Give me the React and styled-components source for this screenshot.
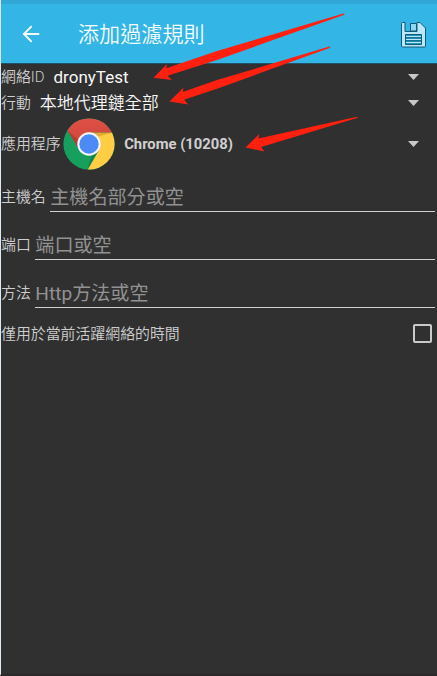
import React from "react";
import styled, { createGlobalStyle } from "styled-components";

const GlobalStyle = createGlobalStyle`
  * { box-sizing: border-box; }
  body {
    margin: 0;
    background: #303030;
    font-family: Roboto, "Noto Sans CJK TC", sans-serif;
  }
`;

const Screen = styled.div`
  position: relative;
  display: flex;
  flex-direction: column;
  width: 437px;
  height: 676px;
  overflow: hidden;
  background: #303030;
  border-left: 1px solid #dce9f2;
  border-bottom: 2px solid #2b282a;
  color: #cecece;
  font-size: 14.9px;
`;

const Header = styled.header`
  display: flex;
  align-items: center;
  height: 64px;
  padding: 2px 10px 0 20px;
  background: #33b5e5;
  border-top: 4px solid #31a7d6;
  border-bottom: 1px solid #1f5468;
`;

const Title = styled.h1`
  flex: 1;
  margin: 0 0 0 35px;
  color: #f6fcfe;
  font-size: 21.1px;
  font-weight: 350;
  line-height: 30px;
`;

const Row = styled.div`
  display: flex;
  align-items: center;
  height: ${(p) => p.$height}px;
  padding-right: ${(p) => p.$end ?? 18}px;
`;

const Label = styled.span`
  flex: none;
  font-weight: 350;
  line-height: 22px;
  white-space: nowrap;
`;

const Value = styled.span`
  flex: 1;
  margin-left: 9px;
  color: ${(p) => (p.$weight === 700 ? "#d0d0d0" : "#f8f8f8")};
  font-size: ${(p) => (p.$weight === 700 ? 14.8 : 17)}px;
  font-weight: ${(p) => p.$weight ?? 400};
  line-height: 24px;
  white-space: nowrap;
`;

const Caret = styled.svg`
  flex: none;
  width: 11px;
  height: 6px;
`;

const FieldRow = styled.label`
  display: flex;
  align-items: center;
  height: 48px;
  padding: 1px 2px 0 0;
`;

const Input = styled.input`
  flex: 1;
  min-width: 0;
  height: 31px;
  margin: 0 0 0 4px;
  padding: 2px 0 0 0.5px;
  border: 0;
  border-bottom: 1px solid #d0d0d0;
  border-radius: 0;
  outline: 0;
  background: transparent;
  color: #eee;
  font: 400 19.1px Roboto, "Noto Sans CJK TC", sans-serif;
  &::placeholder { color: #929292; opacity: 1; }
`;

const Checkbox = styled.input`
  appearance: none;
  width: 19px;
  height: 19px;
  margin: 0 0 0 auto;
  border: 2px solid #cacaca;
  border-radius: 2px;
`;

const Logo = styled.svg`
  flex: none;
  width: 52px;
  height: 52px;
  margin: 0 0 0 2.6px;
`;

const Arrows = styled.svg`
  position: absolute;
  top: 0;
  left: -1px;
  pointer-events: none;
`;

const DropCaret = () => (
  <Caret viewBox="0 0 11 6"><path d="M0 0h11L5.5 6z" fill="#c8c8c8" /></Caret>
);

const BackIcon = () => (
  <svg width="22" height="20" viewBox="0 0 22 20" fill="none" stroke="#f6fcfe" strokeWidth="1.9">
    <path d="M18.3 9H3M10.7 1.2L2.9 9l7.8 7.8" />
  </svg>
);

const SaveIcon = () => (
  <svg width="27" height="28" viewBox="0 0 27 28">
    <path d="M2.5 1.5H5v9h12V1.5h3L25.5 7v18q0 1-1 1h-22q-1 0-1-1V2.5q0-1 1-1z" fill="#b9e8fa" stroke="#125a79" />
    <path d="M10.5 2.5h6v7.5h-6z" fill="#8ed8f4" stroke="#125a79" />
    <path d="M5.5 13.5h16v10h-16z" fill="#2396c3" stroke="#125a79" />
    <path d="M6 15.5h15M6 18.5h15M6 21.5h15" stroke="#b9e8fa" />
    <path d="M6 16.7h15M6 19.7h15" stroke="#125a79" strokeWidth=".8" />
  </svg>
);

const ChromeLogo = () => (
  <Logo viewBox="0 0 52 52">
    <defs>
      <clipPath id="disc"><circle cx="26" cy="26" r="25.6" /></clipPath>
      <linearGradient id="redShade" x2="0" y2="1">
        <stop stopColor="#df5045" /><stop offset="1" stopColor="#d04439" />
      </linearGradient>
    </defs>
    <g clipPath="url(#disc)">
      <path d="M0 0h52v52H0z" fill="#17a05d" />
      <path d="M26 14.5h26V52H24.5L36 32z" fill="#ffce44" />
      <path d="M4.7 12.7L0 0h52v14.5H26L15.8 31z" fill="url(#redShade)" />
      <path d="M26 14.5h24l-15 4z" fill="#a76d12" opacity=".35" />
      <path d="M4.7 12.7l11.5 19 1.5-8z" fill="#7a1d16" opacity=".3" />
      <path d="M36 31.7L24.5 52l4-15z" fill="#0b5130" opacity=".35" />
    </g>
    <circle cx="26" cy="26" r="11.7" fill="#f4f6fa" />
    <circle cx="26" cy="26" r="9.7" fill="#4c8bf5" />
  </Logo>
);

export default function App() {
  return (
    <Screen>
      <GlobalStyle />
      <Header>
        <BackIcon />
        <Title>添加過濾規則</Title>
        <SaveIcon />
      </Header>
      <Row $height={26}>
        <Label>網絡ID</Label>
        <Value>dronyTest</Value>
        <DropCaret />
      </Row>
      <Row $height={25}>
        <Label>行動</Label>
        <Value $weight={350}>本地代理鏈全部</Value>
        <DropCaret />
      </Row>
      <Row $height={57}>
        <Label>應用程序</Label>
        <ChromeLogo />
        <Value $weight={700}>Chrome (10208)</Value>
        <DropCaret />
      </Row>
      <FieldRow>
        <Label>主機名</Label>
        <Input placeholder="主機名部分或空" />
      </FieldRow>
      <FieldRow>
        <Label>端口</Label>
        <Input placeholder="端口或空" />
      </FieldRow>
      <FieldRow>
        <Label>方法</Label>
        <Input placeholder="Http方法或空" />
      </FieldRow>
      <Row $height={35} $end={5}>
        <Label>僅用於當前活躍網絡的時間</Label>
        <Checkbox type="checkbox" />
      </Row>
      <Arrows width="437" height="676" viewBox="0 0 437 676" fill="#ff2010">
        <path d="M153.5 77.8L167 64l-.7 4.3L217 51l126.5-37.6q2 .2 0 1.6L217 60l-49.5 15.7 4.5 4.4z" />
        <path d="M169.5 101.5L183.5 87.5l-.7 4.5L217 80l112.5-33.5q2 .2 0 1.6L217 88.7 184 99.8l4.3 4.6z" />
        <path d="M245.5 147.4L259.3 134l-1 4.5L356 117q3-.4 1 .9L261.2 147l3.2 4.6z" />
      </Arrows>
    </Screen>
  );
}
